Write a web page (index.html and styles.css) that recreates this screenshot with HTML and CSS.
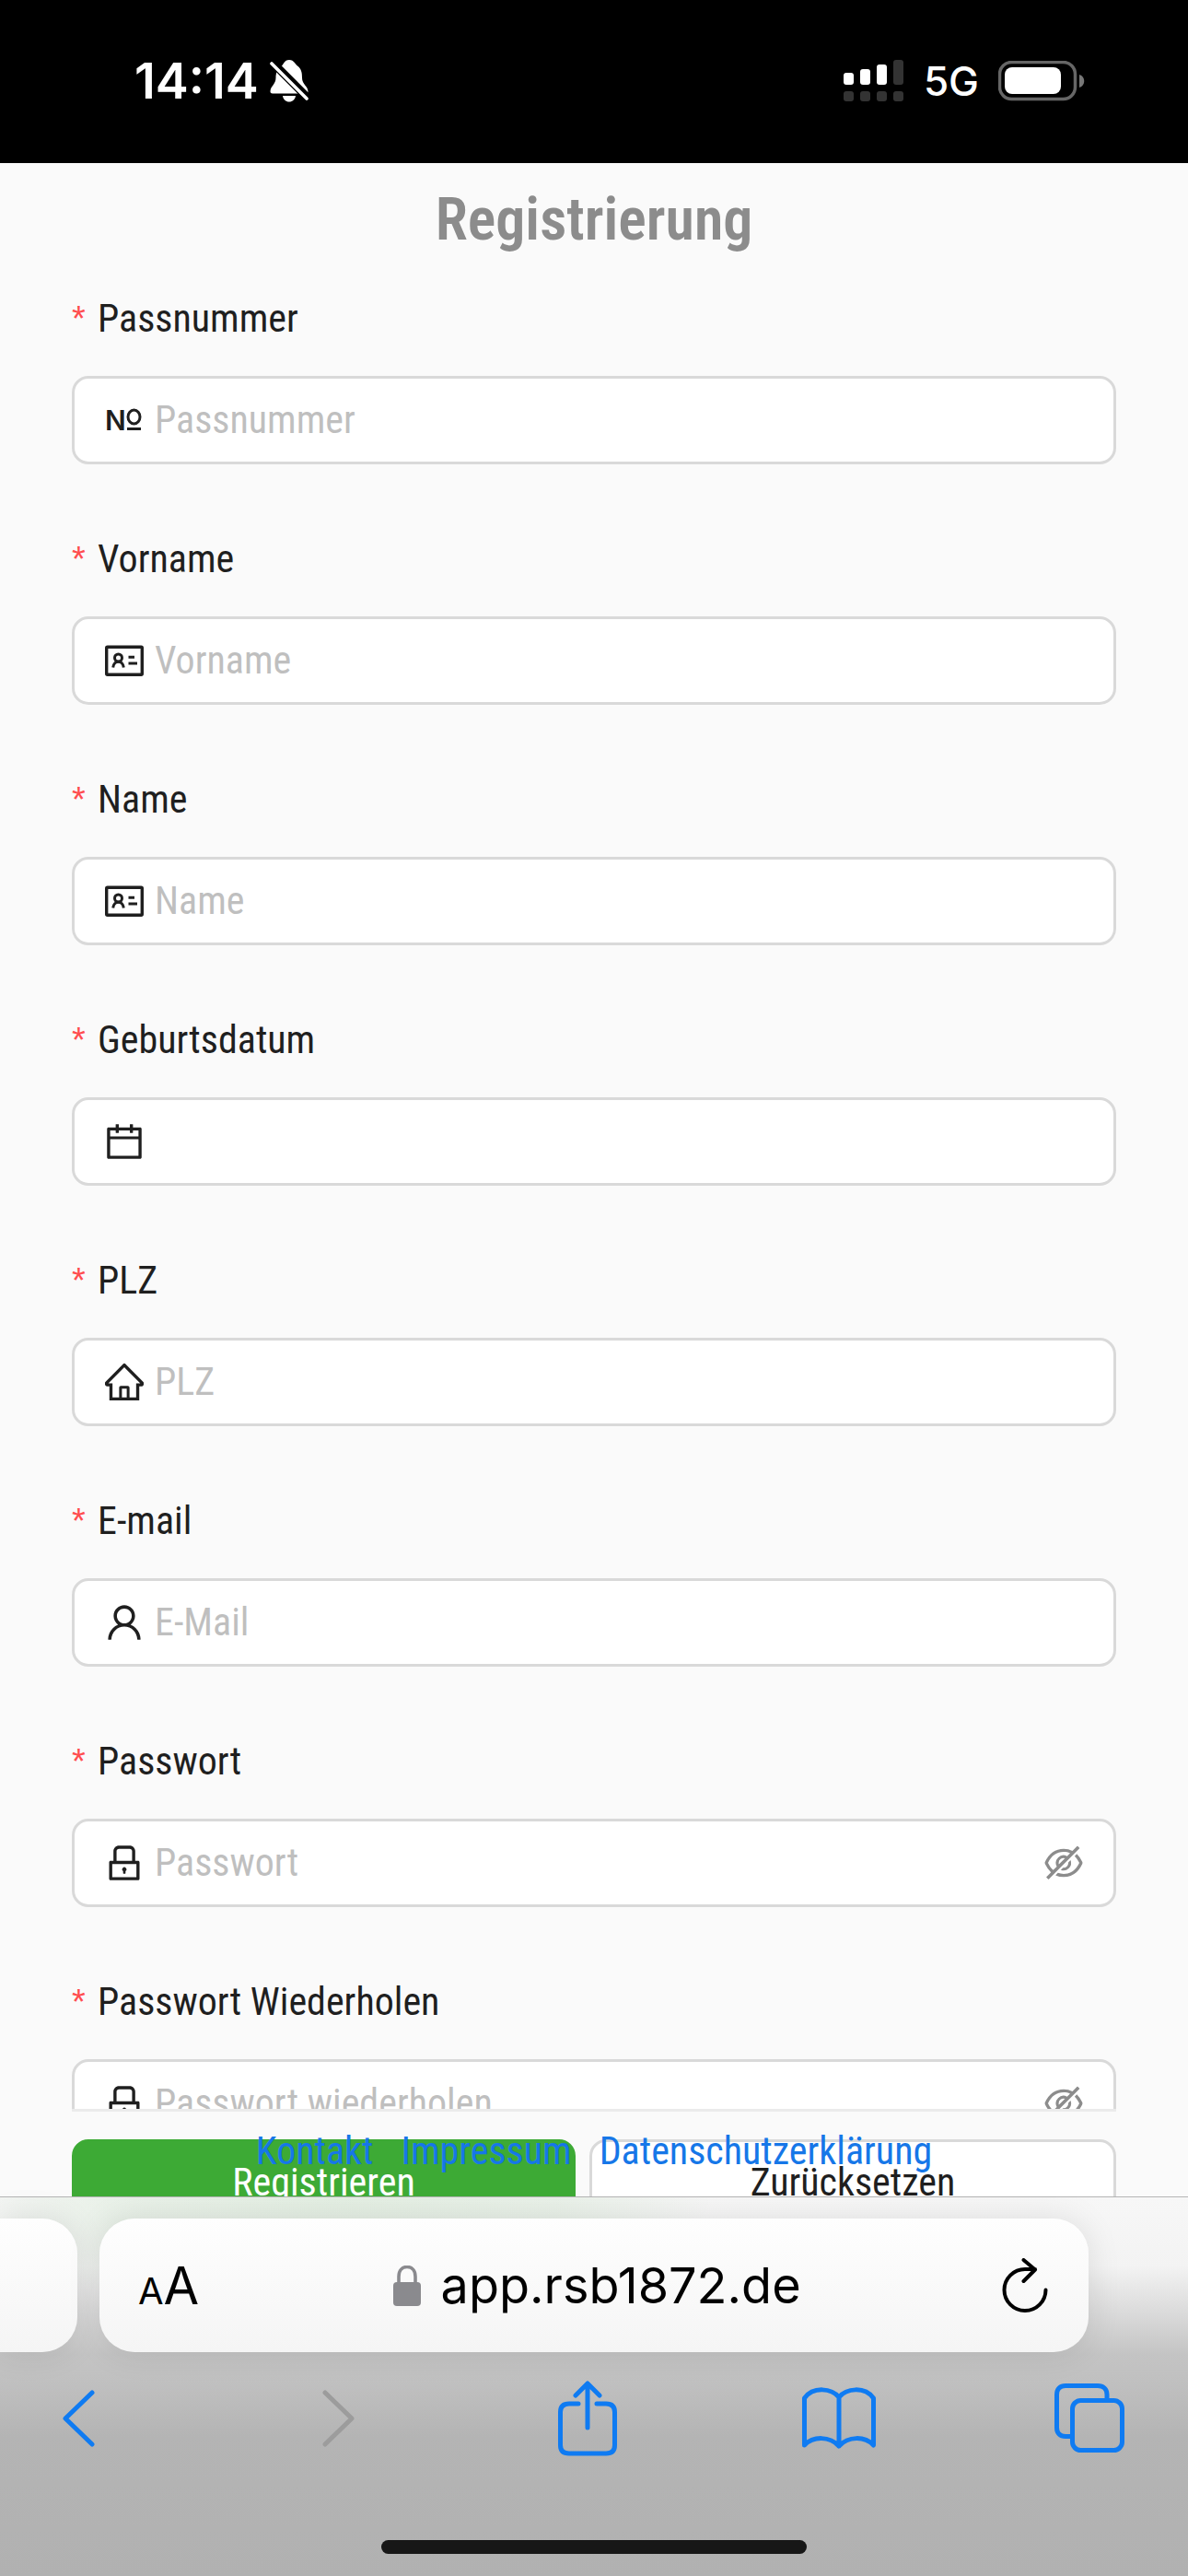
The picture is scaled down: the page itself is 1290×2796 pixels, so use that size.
FILE: index.html
```html
<!DOCTYPE html>
<html lang="de">
<head>
<meta charset="utf-8">
<meta name="viewport" content="width=device-width, initial-scale=1">
<title>Registrierung</title>
<link rel="stylesheet" href="styles.css">
</head>
<body>
<svg class="sprite" aria-hidden="true">
  <symbol id="i-idcard" viewBox="0 0 42 42">
    <rect x="1.700" y="6.200" width="38.600" height="30" rx="1" fill="none" stroke="currentColor" stroke-width="3.400"/>
    <circle cx="14.500" cy="18" r="4" fill="none" stroke="currentColor" stroke-width="3"/>
    <path d="M8.700 28.500c.5-4 3-6.300 5.800-6.300s5.300 2.300 5.800 6.300M25.500 17.200h6.500M25.500 24h9.500" fill="none" stroke="currentColor" stroke-width="3"/>
  </symbol>
  <symbol id="i-calendar" viewBox="64 64 896 896">
    <path d="M880 184H712v-64c0-4.400-3.600-8-8-8h-56c-4.400 0-8 3.600-8 8v64H384v-64c0-4.400-3.600-8-8-8h-56c-4.400 0-8 3.600-8 8v64H144c-17.700 0-32 14.300-32 32v664c0 17.700 14.300 32 32 32h736c17.700 0 32-14.300 32-32V216c0-17.700-14.300-32-32-32zm-40 656H184V460h656v380zM184 392V256h128v48c0 4.400 3.600 8 8 8h56c4.400 0 8-3.600 8-8v-48h256v48c0 4.400 3.600 8 8 8h56c4.400 0 8-3.600 8-8v-48h128v136H184z"/>
  </symbol>
  <symbol id="i-home" viewBox="64 64 896 896">
    <path d="M946.500 505L560.100 118.800l-25.900-25.900a31.500 31.500 0 00-44.400 0L77.500 505a63.900 63.900 0 00-18.800 46c.4 35.200 29.700 63.300 64.900 63.300h42.500V940h691.800V614.300h43.400c17.100 0 33.200-6.700 45.300-18.800a63.600 63.600 0 0018.700-45.300c0-17-6.700-33.100-18.800-45.200zM568 868H456V664h112v204zm217.900-325.700V868H632V640c0-22.100-17.900-40-40-40H432c-22.100 0-40 17.900-40 40v228H238.100V542.300h-96l370-369.700 23.100 23.100L882 542.300h-96.100z"/>
  </symbol>
  <symbol id="i-user" viewBox="64 64 896 896">
    <path d="M858.500 763.600a374 374 0 00-80.600-119.500 375.630 375.630 0 00-119.500-80.600c-.4-.2-.8-.3-1.200-.5C719.500 518 760 444.700 760 362c0-137-111-248-248-248S264 225 264 362c0 82.700 40.500 156 102.800 201.100-.4.200-.8.300-1.200.5-44.800 18.900-85 46-119.500 80.600a375.630 375.630 0 00-80.600 119.500A371.700 371.700 0 00136 901.800a8 8 0 008 8.200h60c4.400 0 7.900-3.500 8-7.800 2-77.200 33-149.500 87.800-204.300 56.700-56.700 132-87.900 212.200-87.900s155.500 31.200 212.200 87.900C779 752.700 810 825 812 902.200c.1 4.400 3.600 7.800 8 7.800h60a8 8 0 008-8.200c-1-47.800-10.900-94.300-29.500-138.200zM512 534c-45.900 0-89.100-17.900-121.600-50.400S340 407.900 340 362c0-45.900 17.900-89.100 50.400-121.600S466.100 190 512 190s89.100 17.900 121.600 50.400S684 316.100 684 362c0 45.900-17.900 89.100-50.400 121.600S557.900 534 512 534z"/>
  </symbol>
  <symbol id="i-lock" viewBox="64 64 896 896">
    <path d="M832 464h-68V240c0-70.700-57.300-128-128-128H388c-70.700 0-128 57.300-128 128v224h-68c-17.700 0-32 14.300-32 32v384c0 17.700 14.300 32 32 32h640c17.700 0 32-14.300 32-32V496c0-17.700-14.300-32-32-32zM332 240c0-30.900 25.100-56 56-56h248c30.900 0 56 25.100 56 56v224H332V240zm460 600H232V536h560v304zM484 701v53c0 4.400 3.600 8 8 8h40c4.400 0 8-3.600 8-8v-53a48.010 48.010 0 10-56 0z"/>
  </symbol>
  <symbol id="i-hidden" viewBox="64 64 896 896">
    <path d="M942.200 486.200Q889.470 375.110 816.700 305l-50.880 50.880C807.310 395.530 843.450 447.400 874.700 512 791.500 684.200 673.400 766 512 766q-72.670 0-133.870-22.380L323 798.750Q408 838 512 838q288.300 0 430.200-300.300a60.290 60.290 0 000-51.500zm-63.570-320.640L836 122.880a8 8 0 00-11.320 0L715.310 232.200Q624.860 186 512 186q-288.300 0-430.200 300.300a60.300 60.300 0 000 51.500q56.690 119.400 136.500 191.410L112.480 835a8 8 0 000 11.310L155.170 889a8 8 0 0011.310 0l712.150-712.120a8 8 0 000-11.320zM149.300 512C232.600 339.800 350.700 258 512 258c54.540 0 104.130 9.360 149.120 28.390l-70.300 70.300a176 176 0 00-238.130 238.130l-83.420 83.420C223.100 637.490 183.300 582.280 149.300 512zm246.700 0a112.110 112.110 0 01146.200-106.690L401.310 546.200A112 112 0 01396 512z"/>
    <path d="M508 624c-3.460 0-6.870-.16-10.250-.47l-52.820 52.820a176.090 176.090 0 00227.420-227.420l-52.820 52.820c.31 3.380.47 6.790.47 10.250a111.940 111.940 0 01-112 112z"/>
  </symbol>
</svg>

<header class="status">
  <div class="status-group">
    <span class="clock">14:14</span>
    <svg class="bell" viewBox="0 0 42 46" aria-label="Stumm">
      <path fill="#fff" d="M13 6.500C15 5 15.500 0 21 0s6.500 5 9 6.500c4.500 3.500 5 8 5 13 0 7 6.500 9 6.500 15 0 1.200-1 2-2 2H3C1.500 36.500.5 35.500.5 34.500c0-6 6-8 6-15 0-5 1.500-9.500 6.500-13zM14 39h14c-.5 4-3.500 6.500-7 6.500S14.500 43 14 39z"/>
      <path d="M3 3l40 40" stroke="#000" stroke-width="9"/>
      <path d="M2 4l38 38" stroke="#fff" stroke-width="3.600" stroke-linecap="round"/>
    </svg>
  </div>
  <div class="status-group status-right">
    <svg class="signal" viewBox="0 0 66 46" aria-label="Signal">
      <g fill="#fff"><rect y="14" width="11" height="13" rx="3"/><rect x="18" y="10" width="11" height="17" rx="3"/><rect x="36" y="5" width="11" height="22" rx="3"/></g>
      <g fill="#333"><rect x="54" width="11" height="27" rx="3"/><rect y="34" width="11" height="11" rx="3"/><rect x="18" y="34" width="11" height="11" rx="3"/><rect x="36" y="34" width="11" height="11" rx="3"/><rect x="54" y="34" width="11" height="11" rx="3"/></g>
    </svg>
    <span class="network">5G</span>
    <svg class="battery" viewBox="0 0 94 44" aria-label="Akku">
      <rect x="1.500" y="1.500" width="82" height="40" rx="13" fill="none" stroke="#666" stroke-width="3.500"/>
      <rect x="7" y="7" width="61" height="29" rx="8" fill="#fff"/>
      <path d="M88 15c7 2 7 12 0 14z" fill="#777"/>
    </svg>
  </div>
</header>

<main class="page">
  <form class="form" id="register">
    <h1 class="title">Registrierung</h1>
    <div class="field">
      <label class="label" for="pass"><span class="star">*</span>Passnummer</label>
      <div class="box">
        <svg class="icon" viewBox="0 0 42 42" aria-hidden="true">
          <text class="number-letter" x="0" y="32">N</text>
          <ellipse cx="31.500" cy="17.500" rx="6.500" ry="7.500" fill="none" stroke="currentColor" stroke-width="3"/>
          <path d="M24 30.500h15" stroke="currentColor" stroke-width="3"/>
        </svg>
        <input class="input" id="pass" type="text" placeholder="Passnummer">
      </div>
    </div>
    <div class="field">
      <label class="label" for="first"><span class="star">*</span>Vorname</label>
      <div class="box"><svg class="icon"><use href="#i-idcard"/></svg><input class="input" id="first" type="text" placeholder="Vorname"></div>
    </div>
    <div class="field">
      <label class="label" for="last"><span class="star">*</span>Name</label>
      <div class="box"><svg class="icon"><use href="#i-idcard"/></svg><input class="input" id="last" type="text" placeholder="Name"></div>
    </div>
    <div class="field">
      <label class="label" for="birth"><span class="star">*</span>Geburtsdatum</label>
      <div class="box"><svg class="icon"><use href="#i-calendar"/></svg><input class="input" id="birth" type="text"></div>
    </div>
    <div class="field">
      <label class="label" for="zip"><span class="star">*</span>PLZ</label>
      <div class="box"><svg class="icon"><use href="#i-home"/></svg><input class="input" id="zip" type="text" placeholder="PLZ"></div>
    </div>
    <div class="field">
      <label class="label" for="mail"><span class="star">*</span>E-mail</label>
      <div class="box"><svg class="icon"><use href="#i-user"/></svg><input class="input" id="mail" type="email" placeholder="E-Mail"></div>
    </div>
    <div class="field">
      <label class="label" for="pw"><span class="star">*</span>Passwort</label>
      <div class="box"><svg class="icon"><use href="#i-lock"/></svg><input class="input" id="pw" type="password" placeholder="Passwort"><button class="reveal" type="button" aria-label="Passwort anzeigen"><svg class="icon"><use href="#i-hidden"/></svg></button></div>
    </div>
    <div class="field">
      <label class="label" for="pw2"><span class="star">*</span>Passwort Wiederholen</label>
      <div class="box"><svg class="icon"><use href="#i-lock"/></svg><input class="input" id="pw2" type="password" placeholder="Passwort wiederholen"><button class="reveal" type="button" aria-label="Passwort anzeigen"><svg class="icon"><use href="#i-hidden"/></svg></button></div>
    </div>
  </form>
  <div class="actions">
    <button class="btn btn-primary" type="submit" form="register">Registrieren</button>
    <button class="btn" type="reset" form="register">Zurücksetzen</button>
    <nav class="links">
      <a href="#kontakt">Kontakt</a>
      <a href="#impressum">Impressum</a>
      <a href="#datenschutz">Datenschutzerklärung</a>
    </nav>
  </div>
</main>

<footer class="browser">
  <div class="tabs">
    <div class="tab tab-previous"></div>
    <div class="tab address">
      <button class="tool text-size" type="button" aria-label="Textgröße"><span class="small-a">A</span><span>A</span></button>
      <button class="tool url" type="button">
        <svg class="padlock" viewBox="0 0 30 44"><rect y="18" width="30" height="26" rx="4" fill="#8a8a8e"/><path d="M6 20v-8C6 5 10 1.500 15 1.500S24 5 24 12v8" fill="none" stroke="#8a8a8e" stroke-width="3.600"/></svg>
        <span>app.rsb1872.de</span>
      </button>
      <button class="tool" type="button" aria-label="Neu laden"><svg class="reload" viewBox="0 0 50 60"><path d="M47.500 34.500A22.500 22.500 0 1 1 25 12h11M23.500 2L36 12.500 23.500 25"/></svg></button>
    </div>
  </div>
  <nav class="toolbar">
    <button class="tool" type="button" aria-label="Zurück"><svg class="chevron" viewBox="0 0 52 62"><path d="M33 3L4 31l29 28"/></svg></button>
    <button class="tool disabled" type="button" aria-label="Vor" disabled><svg class="chevron" viewBox="0 0 52 62"><path d="M13 3l29 28-29 28"/></svg></button>
    <button class="tool" type="button" aria-label="Teilen"><svg class="share" viewBox="0 0 64 82"><path d="M22 25H12c-6 0-9.500 3-9.500 9v36c0 6 3.500 9 9.500 9h40c6 0 9.500-3 9.500-9V34c0-6-3.500-9-9.500-9H42M32 51V3M19 16L32 3l13 13"/></svg></button>
    <button class="tool" type="button" aria-label="Lesezeichen"><svg class="book" viewBox="0 0 80 68"><path d="M40 11v53M40 11C32 1 12-1 2.500 12v51C12 53 30 53 40 64c10-11 28-11 37.500-1V12C68-1 48 1 40 11z"/></svg></button>
    <button class="tool" type="button" aria-label="Tabs"><svg class="windows" viewBox="0 0 76 76"><path d="M57 18v-6c0-6-4-9.500-10-9.500H12C6 2.500 2.500 6 2.500 12v36c0 6 3.500 9.500 9.500 9.500h7"/><rect x="19.500" y="18.500" width="54" height="54" rx="9"/></svg></button>
  </nav>
  <div class="home-bar"></div>
</footer>
</body>
</html>
```
FILE: styles.css
```css
* { box-sizing: border-box; }

body {
  margin: 0;
  height: 100vh;
  display: flex;
  flex-direction: column;
  overflow: hidden;
  background: #fafafa;
  color: #1f1f1f;
  font: 42px/66px "Roboto Condensed", "Liberation Sans Narrow", Roboto, sans-serif;
}

button, input { font: inherit; color: inherit; }
svg { display: block; flex: none; fill: currentColor; }
.sprite { position: absolute; width: 0; height: 0; }
.number-letter { font: 600 30px Inter, sans-serif; }

/* Status bar */
.status {
  flex: none;
  display: flex;
  justify-content: space-between;
  padding: 56px 112px 57px 146px;
  background: #000;
  color: #fff;
  font-family: Inter, sans-serif;
}
.status-group { display: flex; align-items: center; gap: 12px; height: 64px; }
.status-right { gap: 21px; }
.clock { font-size: 54px; font-weight: 600; }
.network { font-size: 44px; font-weight: 500; }
.bell { width: 42px; height: 46px; }
.signal { width: 66px; height: 46px; }
.battery { width: 94px; height: 44px; }

/* Registration form */
.page {
  flex: 1;
  min-height: 0;
  display: flex;
  flex-direction: column;
  padding: 0 78px;
  overflow: hidden;
}
.form {
  flex: 1;
  min-height: 0;
  overflow: hidden;
  padding-top: 26px;
  border-bottom: 3px solid #ebebeb;
}
.title {
  margin: 0 0 38px;
  font-size: 64px;
  line-height: 72px;
  font-weight: 600;
  text-align: center;
  color: #8c8c8c;
}
.field { display: flex; flex-direction: column; gap: 29px; margin-bottom: 70px; }
.field:last-child { margin-bottom: 0; }
.label { display: flex; }
.star { width: 28px; color: #ff4d4f; font-family: "Liberation Sans", sans-serif; font-size: 38px; }
.box {
  display: flex;
  align-items: center;
  gap: 12px;
  height: 96px;
  padding: 0 33px;
  border: 3px solid #d9d9d9;
  border-radius: 18px;
  background: #fff;
}
.icon { width: 42px; height: 42px; }
.input {
  flex: 1;
  min-width: 0;
  height: 66px;
  padding: 0;
  border: 0;
  outline: 0;
  background: none;
}
.input::placeholder { color: #bfbfbf; opacity: 1; }
.reveal { padding: 0; border: 0; background: none; color: #8c8c8c; }

.actions {
  position: relative;
  flex: none;
  display: grid;
  grid-template-columns: 547fr 572fr;
  gap: 15px;
  height: 92px;
  padding-top: 30px;
}
.btn {
  height: 93px;
  padding: 0;
  border: 3px solid #d9d9d9;
  border-radius: 18px;
  background: #fff;
}
.btn-primary { border-color: #3daa35; background: #3daa35; color: #fff; }
.links {
  position: absolute;
  inset: 10px 0 auto;
  display: flex;
  justify-content: center;
  gap: 30px;
}
.links a { color: #1677e8; text-decoration: none; }

/* Browser chrome */
.browser {
  flex: none;
  display: flex;
  flex-direction: column;
  border-top: 1px solid #b4b4b4;
  padding-bottom: 24px;
  background:
    radial-gradient(ellipse 32% 130px at 28% 0, rgba(61, 170, 53, .1), rgba(61, 170, 53, .07) 60%, transparent) top / 100% 130px no-repeat,
    linear-gradient(#f7f7f7, #f3f3f3 75px, #d8d8d8 130px, #c4c4c4 170px, #c0c0c0 200px, #b4b4b4 260px, #b1b1b1);
}
.tabs { display: flex; gap: 24px; padding: 23px 108px 0 0; }
.tab {
  height: 145px;
  border-radius: 38px;
  background: linear-gradient(#fefefe, #f5f5f5);
  box-shadow: 0 0 36px rgba(0, 0, 0, .1);
}
.tab-previous { flex: none; width: 84px; border-radius: 0 38px 38px 0; }
.address {
  flex: 1;
  display: flex;
  align-items: center;
  justify-content: space-between;
  padding: 0 44px 0 42px;
  color: #000;
  font-family: Inter, sans-serif;
  font-size: 54px;
}
.tool { display: flex; align-items: center; padding: 0; border: 0; background: none; }
.text-size { align-items: baseline; padding-top: 6px; font-size: 56px; }
.small-a { font-size: 40px; }
.url { gap: 22px; margin-right: 8px; }
.padlock { width: 30px; height: 44px; }
.reload {
  width: 50px;
  height: 60px;
  fill: none;
  stroke: #000;
  stroke-width: 4;
  stroke-linecap: round;
  stroke-linejoin: round;
}
.toolbar {
  display: flex;
  align-items: center;
  justify-content: space-between;
  height: 144px;
  padding: 0 81px 0 67px;
  color: #0f7bf2;
}
.toolbar .tool { width: 52px; justify-content: center; }
.toolbar svg { fill: none; stroke: currentColor; stroke-width: 5; stroke-linecap: round; stroke-linejoin: round; }
.toolbar .disabled { color: #9c9c9c; }
.chevron { width: 52px; height: 62px; }
.share { width: 64px; height: 82px; }
.book { width: 80px; height: 68px; }
.windows { width: 76px; height: 76px; }
.home-bar { width: 462px; height: 15px; margin: 60px auto 0; border-radius: 8px; background: #171717; }
```
